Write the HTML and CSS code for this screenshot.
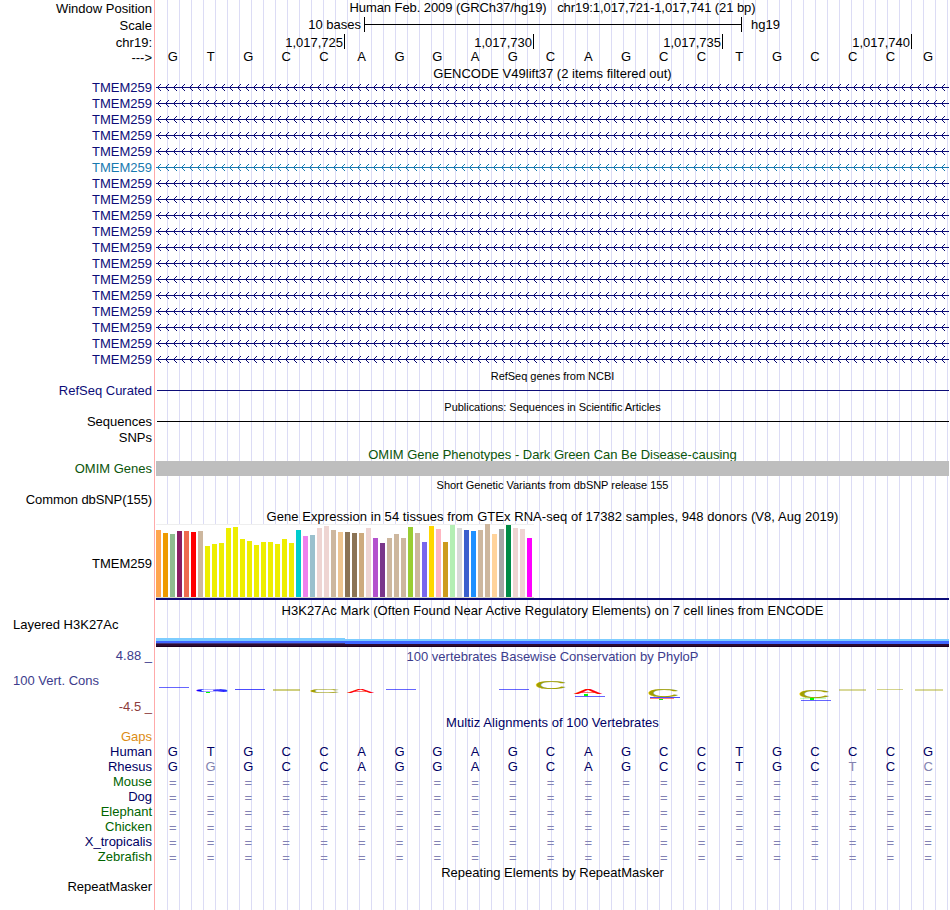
FILE: index.html
```html
<!DOCTYPE html>
<html lang="en">
<head>
    <meta charset="UTF-8">
    <meta name="viewport" content="width=device-width, initial-scale=1.0">
    <title>Genome Browser</title>
    <link rel="stylesheet" href="styles.css">
</head>
<body>
    <div class="browser">
        <div class="row header-row">
            <div class="label">Window Position</div>
            <div class="title position">Human Feb. 2009 (GRCh37/hg19)&nbsp;&nbsp; chr19:1,017,721-1,017,741 (21 bp)</div>
        </div>
        <div class="row header-row">
            <div class="label">Scale</div>
            <div class="data scale">
                <span class="scale-text">10 bases</span>
                <div class="ruler"><div class="ruler-line"></div></div>
                <span>hg19</span>
            </div>
        </div>
        <div class="row chrom-row">
            <div class="label">chr19:</div>
            <div class="data ticks">
                <span>1,017,725</span>
                <span>1,017,730</span>
                <span>1,017,735</span>
                <span>1,017,740</span>
            </div>
        </div>
        <div class="row bases-row">
            <div class="label">---&gt;</div>
            <div class="data bases" data-seq="GTGCCAGGAGCAGCCTGCCCG"></div>
        </div>

        <div class="row gencode-title"><div class="title">GENCODE V49lift37 (2 items filtered out)</div></div>
        <div id="genes"></div>

        <div class="row"><div class="title small">RefSeq genes from NCBI</div></div>
        <div class="row tall navy">
            <div class="label">RefSeq Curated</div>
            <div class="data"><div class="line"></div></div>
        </div>

        <div class="row"><div class="title small">Publications: Sequences in Scientific Articles</div></div>
        <div class="row tall">
            <div class="label">Sequences</div>
            <div class="data"><div class="line"></div></div>
        </div>
        <div class="row tall"><div class="label">SNPs</div></div>

        <div class="row omim"><div class="title omim-title">OMIM Gene Phenotypes - Dark Green Can Be Disease-causing</div></div>
        <div class="row omim">
            <div class="label">OMIM Genes</div>
            <div class="data omim-band"></div>
        </div>

        <div class="row tall"><div class="title small dbsnp">Short Genetic Variants from dbSNP release 155</div></div>
        <div class="row tall"><div class="label tight">Common dbSNP(155)</div></div>

        <div class="row tall gtex-title"><div class="title wide">Gene Expression in 54 tissues from GTEx RNA-seq of 17382 samples, 948 donors (V8, Aug 2019)</div></div>
        <div class="row gtex-row">
            <div class="label">TMEM259</div>
            <div class="data gtex"><div class="chart" id="chart"></div></div>
        </div>

        <div class="row h3k-title"><div class="title wide">H3K27Ac Mark (Often Found Near Active Regulatory Elements) on 7 cell lines from ENCODE</div></div>
        <div class="row h3k-row">
            <div class="label left">Layered H3K27Ac</div>
            <div class="data layers">
                <div class="layer-high"></div>
                <div class="layer-low"></div>
            </div>
        </div>

        <div class="row header-row phylop">
            <div class="label">4.88 _</div>
            <div class="title phylop-title">100 vertebrates Basewise Conservation by PhyloP</div>
        </div>
        <div class="row cons-row phylop">
            <div class="cons-labels">
                <div class="label left">100 Vert. Cons</div>
                <div class="label minimum">-4.5 _</div>
            </div>
            <svg id="logo" width="793" height="50" viewBox="156 664 793 50"></svg>
        </div>

        <div class="row multiz multiz-title"><div class="title wide">Multiz Alignments of 100 Vertebrates</div></div>
        <div class="row align gaps"><div class="label">Gaps</div></div>
        <div class="row align multiz">
            <div class="label">Human</div>
            <div class="data bases" data-seq="GTGCCAGGAGCAGCCTGCCCG"></div>
        </div>
        <div class="row align multiz">
            <div class="label">Rhesus</div>
            <div class="data bases" data-seq="GgGCCAGGAGCAGCCTGCtCc"></div>
        </div>
        <div id="species"></div>

        <div class="row"><div class="title">Repeating Elements by RepeatMasker</div></div>
        <div class="row align"><div class="label">RepeatMasker</div></div>
    </div>
    <script src="script.js"></script>
</body>
</html>
```
FILE: styles.css
```css
body {
    margin: 0;
    background: #fff;
    color: #000;
    font-family: "Liberation Sans", Arial, Helvetica, sans-serif;
    font-size: 13px;
    overflow: hidden;
}

/* window edge in pink, guide lines every 12px */
.browser {
    width: 949px;
    height: 910px;
    background:
        linear-gradient(#ffaaaa, #ffaaaa) 154px 0 / 1px 100% no-repeat,
        repeating-linear-gradient(to right, #dcdcf5 0, #dcdcf5 1px, transparent 1px, transparent 12px) 167px 0 / 782px 100% no-repeat;
}

.row {
    display: flex;
    height: 15px;
    line-height: 15px;
    white-space: pre;
}

.tall {
    height: 16px;
    line-height: 16px;
}

.header-row, .chrom-row {
    height: 17px;
    line-height: 17px;
}

.chrom-row { height: 16px; }

.bases-row { line-height: 13px; }
.bases-row > .label { line-height: 16px; }

.label {
    width: 152px;
    margin-right: 4px;
    text-align: right;
    flex: none;
}

.label.left {
    width: 139px;
    padding-left: 13px;
    text-align: left;
}

.tight { letter-spacing: -0.1px; }

.data { width: 793px; }

.title {
    width: 793px;
    margin-left: auto;
    text-align: center;
}

.label + .title { margin-left: 0; }

.wide { letter-spacing: 0.05px; }

.position {
    line-height: 15px;
    letter-spacing: -0.08px;
}

.small {
    font-size: 11px;
    line-height: 17px;
    letter-spacing: -0.03px;
}

.scale { display: flex; line-height: 15px; }

.scale-text {
    width: 205px;
    margin-right: 3px;
    text-align: right;
}

.ruler {
    width: 376px;
    height: 15px;
    margin-right: 9px;
    border-left: 1px solid #000;
    border-right: 1px solid #000;
}

.ruler-line {
    height: 1px;
    margin-top: 7px;
    background: #000;
}

.ticks { display: flex; }

.ticks span {
    width: 187px;
    height: 15px;
    padding-right: 1px;
    border-right: 1px solid #000;
    text-align: right;
}

.bases {
    display: grid;
    grid-template-columns: repeat(21, 1fr);
    margin-left: -2px;
    text-align: center;
}

.gencode-title { line-height: 17px; }

.navy, .gene { color: #0c0c78; }
.gene.alt { color: #1779b0; }

.arrows { display: block; }

.arrows path {
    fill: none;
    stroke: currentColor;
}

.line {
    height: 1px;
    margin: 7px 0 0 1px;
    background: currentColor;
}

.omim { color: #0b550b; }
.omim-title { line-height: 17px; }
.omim-band { background: #bebebe; }
.dbsnp { line-height: 19px; }
.gtex-title .title { line-height: 17px; }

.gtex-row {
    height: 74px;
    line-height: 80px;
    padding-bottom: 2px;
}

.gtex {
    height: 74px;
    border-bottom: 2px solid #0c0c78;
}

.chart {
    display: flex;
    align-items: flex-end;
    gap: 2px;
    width: 378px;
    height: 72px;
    background: #fff;
    border-top: 1px solid #eee;
    border-bottom: 1px solid #d3d3c8;
}

.bar { width: 5px; }

.h3k-title {
    height: 17px;
    line-height: 21px;
}

.h3k-row { height: 30px; }

.layers {
    display: flex;
    align-items: flex-end;
}

.layer-high {
    width: 189px;
    height: 9px;
    background: linear-gradient(#7dcdff 3px, #3f66ff 3px 5px, #43357d 5px 6px, #2d0a32 6px 8px, #1c001c 8px);
}

.layer-low {
    flex: 1;
    height: 8px;
    background: linear-gradient(#7dcdff 2px, #3f66ff 2px 5px, #2d0a32 5px 7px, #1c001c 7px);
}

.phylop { color: #3c3c8c; }
.phylop-title { line-height: 20px; }

.cons-row {
    height: 50px;
    white-space: normal;
}

.cons-labels { line-height: 34px; }

.minimum {
    color: #8c3c3c;
    line-height: 17px;
}

.multiz { color: #000064; }

.multiz-title {
    height: 16px;
    line-height: 18px;
}

.align { line-height: 13px; }
.gaps { color: #dc8c14; }
.green { color: #006400; }
.mismatch { color: #8282af; }

.same {
    color: #8282b4;
    line-height: 16px;
}

/* sequence logo letters */
#logo text {
    font-size: 100px;
    stroke-width: 0.4px;
    vector-effect: non-scaling-stroke;
}
```
FILE: script.js
```js
// gene rows, strand arrows every 8px
let genes = '';
for (let i = 0; i < 18; i++) {
    let arrows = 'M0 7.5H793';
    for (let x = 1; x < 793; x += 8) {
        arrows += `M${x + 4} 4L${x + 0.5} 7.5L${x + 4} 11`;
    }
    genes += `
        <div class="row tall gene ${i === 5 ? 'alt' : ''}">
            <div class="label">TMEM259</div>
            <svg class="arrows" width="793" height="16"><path d="${arrows}"/></svg>
        </div>`;
}
document.getElementById('genes').innerHTML = genes;

// lower case marks a base that differs from human
document.querySelectorAll('[data-seq]').forEach(el => {
    el.innerHTML = [...el.dataset.seq].map(b =>
        `<span class="${b === b.toLowerCase() ? 'mismatch' : ''}">${b.toUpperCase()}</span>`).join('');
});

const species = [
    ['Mouse', 'green'], ['Dog', 'multiz'], ['Elephant', 'green'],
    ['Chicken', 'green'], ['X_tropicalis', 'multiz'], ['Zebrafish', 'green']
];
document.getElementById('species').innerHTML = species.map(([name, color]) => `
    <div class="row align ${color}">
        <div class="label">${name}</div>
        <div class="data bases same">${'<span>=</span>'.repeat(21)}</div>
    </div>`).join('');

// GTEx median expression: colour and bar height
const tissues = [
    ['#ffa54f', 67], ['#ee9a00', 64], ['#8fbc8f', 63], ['#8b1c62', 66], ['#ee6a50', 66], ['#ff0000', 65],
    ['#cdb79e', 66], ['#eeee00', 51], ['#eeee00', 53], ['#eeee00', 54], ['#eeee00', 69], ['#eeee00', 70],
    ['#eeee00', 58], ['#eeee00', 56], ['#eeee00', 52], ['#eeee00', 55], ['#eeee00', 55], ['#eeee00', 53],
    ['#eeee00', 58], ['#eeee00', 54], ['#00cdcd', 67], ['#ee82ee', 61], ['#9ac0cd', 62], ['#eed5d2', 69],
    ['#eed5d2', 71], ['#cdb79e', 67], ['#eec591', 65], ['#8b7355', 65], ['#8b7355', 64], ['#cdaa7d', 64],
    ['#eed5d2', 69], ['#b452cd', 59], ['#7a378b', 54], ['#cdb79e', 59], ['#cdb79e', 63], ['#cdb79e', 59],
    ['#9acd32', 70], ['#cdb79e', 64], ['#7a67ee', 55], ['#ffd700', 71], ['#ffb6c1', 68], ['#cd9b1d', 55],
    ['#b4eeb4', 72], ['#d9d9d9', 69], ['#3a5fcd', 67], ['#1e90ff', 66], ['#cdb79e', 67], ['#cdb79e', 73],
    ['#ffd39b', 63], ['#a6a6a6', 68], ['#008b45', 72], ['#eed5d2', 69], ['#eed5d2', 68], ['#ff00ff', 59]
];
document.getElementById('chart').innerHTML = tissues.map(([color, h]) =>
    `<div class="bar" style="height:${h}px;background:${color}"></div>`).join('');

// left edge and width of each glyph at 100px
const glyphs = { A: [0, 66.7], C: [5, 64], G: [5, 66] };
const olive = '#a0a000';

function letter(ch, x, y, w, h, color) {
    const [left, width] = glyphs[ch];
    const sx = w / width;
    const sy = h / 71;
    return `<text transform="translate(${x - left * sx} ${y + h - sy}) scale(${sx} ${sy})" fill="${color}" stroke="${color}">${ch}</text>`;
}

function flat(x, y, w, h, color, opacity = 1) {
    return `<rect x="${x}" y="${y}" width="${w}" height="${h}" fill="${color}" opacity="${opacity}"/>`;
}

document.getElementById('logo').innerHTML = [
    flat(159, 687, 30, 1, '#0000ff', 0.6),
    letter('G', 196.5, 689, 30.5, 3, '#0000ff'),
    flat(206, 692, 4, 1, '#00ff00'),
    flat(235, 689, 30, 1, '#0000ff', 0.7),
    flat(273, 689, 27, 2, olive, 0.5),
    letter('C', 311, 689, 28, 4, olive),
    letter('A', 347, 689, 27, 4, '#ff0000'),
    flat(386, 689, 30, 1, '#0000ff', 0.6),
    flat(499, 689, 30, 1, '#0000ff', 0.6),
    letter('C', 536.5, 681, 29, 8, olive),
    letter('A', 574, 689, 28, 5, '#ff0000'),
    flat(584, 694, 4, 2, '#00ff00'),
    flat(575, 696, 30, 1, '#0000ff', 0.6),
    letter('C', 649, 689, 29, 8, olive),
    flat(650, 697, 30, 1, '#0000ff', 0.7),
    flat(650, 698, 24, 1, '#ff0000', 0.5),
    flat(659, 699, 4, 1, '#00ff00'),
    letter('C', 800, 690, 29, 8, olive),
    flat(800, 698, 26, 1, '#00ff00', 0.25),
    flat(810, 698, 4, 2, '#00ff00'),
    flat(801, 700, 30, 1, '#0000ff', 0.6),
    flat(839, 689, 27, 2, olive, 0.4),
    flat(877, 689, 26, 1, olive, 0.45),
    flat(915, 689, 28, 2, olive, 0.4)
].join('');
```
